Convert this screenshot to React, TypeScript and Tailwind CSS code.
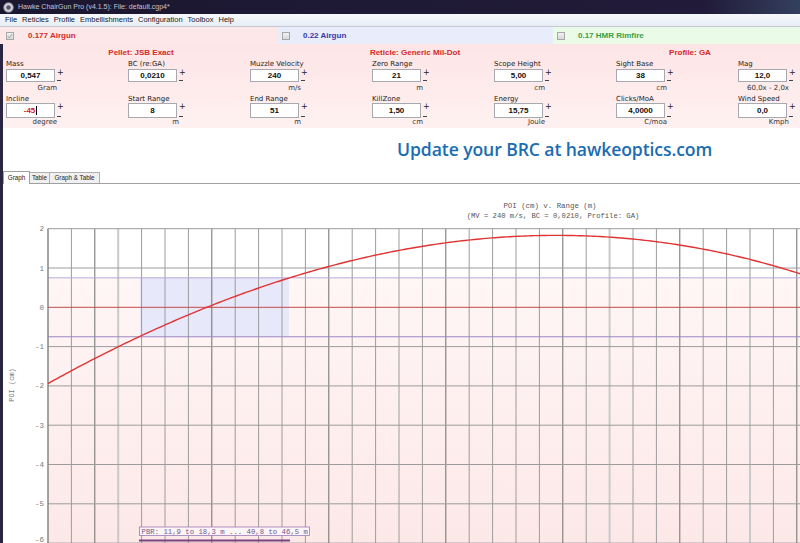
import React from 'react';

type Field = { label: string; value: string; unit: string; red?: boolean };

const row1: Field[] = [
  { label: 'Mass', value: '0,547', unit: 'Gram' },
  { label: 'BC (re:GA)', value: '0,0210', unit: '' },
  { label: 'Muzzle Velocity', value: '240', unit: 'm/s' },
  { label: 'Zero Range', value: '21', unit: 'm' },
  { label: 'Scope Height', value: '5,00', unit: 'cm' },
  { label: 'Sight Base', value: '38', unit: 'cm' },
  { label: 'Mag', value: '12,0', unit: '60,0x - 2,0x' },
];

const row2: Field[] = [
  { label: 'Incline', value: '-45', unit: 'degree', red: true },
  { label: 'Start Range', value: '8', unit: 'm' },
  { label: 'End Range', value: '51', unit: 'm' },
  { label: 'KillZone', value: '1,50', unit: 'cm' },
  { label: 'Energy', value: '15,75', unit: 'Joule' },
  { label: 'Clicks/MoA', value: '4,0000', unit: 'C/moa' },
  { label: 'Wind Speed', value: '0,0', unit: 'Kmph' },
];

function ParamRow({ fields, tall }: { fields: Field[]; tall?: boolean }) {
  return (
    <div className="flex pl-[3px]">
      {fields.map((f) => (
        <div key={f.label} className="w-[122px] shrink-0">
          <div className={(tall ? 'h-[8px] leading-[8px]' : 'h-[9px] leading-[9px]') + ' text-[7px] text-[#222] whitespace-nowrap'}>
            {f.label}
          </div>
          <div className={(tall ? 'h-[15px]' : 'h-[13px]') + ' flex'}>
            <div className="w-[49px] h-full bg-white border border-[#a7a9b0] flex items-center justify-center font-['Liberation_Sans',sans-serif] font-bold text-[8px]">
              {f.red ? (
                <span className="text-[#d42020] flex items-center">
                  {f.value}
                  <span className="inline-block w-[1px] h-[9px] bg-black ml-[1px]" />
                </span>
              ) : (
                <span className="text-[#111]">{f.value}</span>
              )}
            </div>
            <div className="w-[8px] pl-[2px] flex flex-col justify-between text-[#222]">
              <span className="text-[8px] leading-[8px]">+</span>
              <span className="block w-[4px] h-[1px] bg-[#444] mb-[1px]" />
            </div>
          </div>
          <div className={(tall ? 'h-[8px] leading-[8px]' : 'h-[13px] leading-[13px]') + ' w-[51px] text-right text-[7px] text-[#333] whitespace-nowrap'}>
            {f.unit}
          </div>
        </div>
      ))}
    </div>
  );
}

function Check({ checked }: { checked?: boolean }) {
  return (
    <div className="w-[8px] h-[8px] border border-[#a8a8a8] bg-gradient-to-b from-[#f2f2f2] to-[#d8d8d8] flex items-center justify-center">
      {checked && (
        <svg width="6" height="6" viewBox="0 0 6 6">
          <path d="M0.8 3.2 L2.3 4.7 L5.2 1" stroke="#9a9a9a" strokeWidth="1" fill="none" />
        </svg>
      )}
    </div>
  );
}

function Chart() {
  const x0 = 48;
  const step = 23.4;
  const yv = (v: number) => 307.3 - v * 39.3;
  const vlines = Array.from({ length: 33 }, (_, i) => i);
  const hvals = [2, 1, 0, -1, -2, -3, -4, -5, -6];
  // trajectory fitted as a cubic in range (m) past the start range
  const poi = (s: number) => -1.94 + 0.33208 * s - 0.0066037 * s * s - 0.0000319 * s * s * s;
  let curve = '';
  for (let x = x0; x <= 802; x += 3) {
    const s = (x - x0) / step;
    curve += (x === x0 ? 'M' : ' L') + x + ' ' + yv(poi(s)).toFixed(2);
  }
  return (
    <svg width="797" height="359" viewBox="3 184 797 359" className="block">
      <defs>
        <linearGradient id="pinkbg" x1="0" y1="0" x2="0" y2="1">
          <stop offset="0" stopColor="#fff6f6" />
          <stop offset="1" stopColor="#fde8e8" />
        </linearGradient>
      </defs>
      <rect x="3" y="184" width="797" height="359" fill="#ffffff" />
      <rect x={x0} y={yv(0.75)} width={800 - x0} height={543 - yv(0.75)} fill="url(#pinkbg)" />
      <rect x="140" y={yv(0.75)} width="149" height={yv(-0.75) - yv(0.75)} fill="#e8e8fb" />
      {vlines.map((i) => {
        const x = x0 + i * step;
        const dark = (i + 8) % 5 === 0;
        const light = i === 3 || i === 24 || i === 30;
        return (
          <line
            key={i}
            x1={x}
            x2={x}
            y1={yv(2)}
            y2={543}
            stroke={dark ? '#6e6e6e' : light ? '#c9c9c9' : '#9c9c9c'}
            strokeWidth={light ? 2 : 1}
          />
        );
      })}
      {hvals.map((v) => (
        <line key={v} x1={x0} x2={800} y1={yv(v)} y2={yv(v)} stroke={v === 0 ? '#c24a4a' : '#9c9c9c'} strokeWidth="1" />
      ))}
      <line x1={x0} x2={800} y1={yv(0.75)} y2={yv(0.75)} stroke="#b6a8d6" strokeWidth="1" />
      <line x1={x0} x2={800} y1={yv(-0.75)} y2={yv(-0.75)} stroke="#9a86c4" strokeWidth="1" />
      <line x1={x0} x2={x0} y1={yv(2)} y2={543} stroke="#7a7a7a" strokeWidth="1" />
      <path d={curve} stroke="#e03434" strokeWidth="1.4" fill="none" strokeLinejoin="round" />
      {hvals.map((v) => (
        <text
          key={v}
          x="44"
          y={v === -6 ? 541.5 : yv(v) + 2.5}
          textAnchor="end"
          fontFamily="Liberation Mono, monospace"
          fontSize="7.5"
          fill="#7a7a7a"
        >
          {v < 0 ? '-' + Math.abs(v) : v}
        </text>
      ))}
      <text
        x="14"
        y="385"
        transform="rotate(-90 14 385)"
        textAnchor="middle"
        fontFamily="Liberation Mono, monospace"
        fontSize="7"
        fill="#7a7a7a"
      >
        POI (cm)
      </text>
      <text x="550" y="208" textAnchor="middle" fontFamily="Liberation Mono, monospace" fontSize="7.4" fill="#555">
        POI (cm) v. Range (m)
      </text>
      <text x="553" y="217.5" textAnchor="middle" fontFamily="Liberation Mono, monospace" fontSize="7.2" fill="#555">
        (MV = 240 m/s, BC = 0,0210, Profile: GA)
      </text>
      <rect x="139.5" y="527" width="170" height="8.5" fill="#fdf4f8" stroke="#9a7cb8" strokeWidth="0.8" />
      <text x="141.5" y="533.6" fontFamily="Liberation Mono, monospace" fontSize="7.3" fill="#6e5a8a">
        PBR: 11,9 to 18,3 m ... 40,8 to 46,5 m
      </text>
      <line x1="139" x2="290" y1="540.5" y2="540.5" stroke="#7e3f7e" strokeWidth="2" />
    </svg>
  );
}

export default function App() {
  const menu = ['File', 'Reticles', 'Profile', 'Embellishments', 'Configuration', 'Toolbox', 'Help'];
  return (
    <div className="w-[800px] h-[543px] overflow-hidden bg-white font-['DejaVu_Sans',sans-serif] flex flex-col">
      {/* title bar */}
      <div className="h-[14px] shrink-0 flex items-center bg-[linear-gradient(90deg,#1b1730_0%,#211b39_88%,#33405e_100%)]">
        <svg width="11" height="11" viewBox="0 0 11 11" className="ml-[3px]">
          <circle cx="5.5" cy="5.5" r="4.8" fill="#cfcfd6" stroke="#8a8a96" strokeWidth="0.8" />
          <circle cx="5.5" cy="5.5" r="2.2" fill="#55556a" />
        </svg>
        <span className="ml-[4px] font-['Liberation_Sans',sans-serif] text-[7px] text-[#c6c3d2] whitespace-nowrap">
          Hawke ChairGun Pro (v4.1.5): File: default.cgp4*
        </span>
      </div>
      {/* menu bar */}
      <div className="h-[13px] shrink-0 flex items-center gap-[5px] pl-[5px] bg-gradient-to-b from-[#f6f8fc] to-[#e8edf5] border-b border-[#c4c9d6] font-['Liberation_Sans',sans-serif] text-[7.5px] text-[#1a1a1a]">
        {menu.map((m) => (
          <span key={m}>{m}</span>
        ))}
      </div>
      {/* gun tabs */}
      <div className="h-[17px] shrink-0 flex font-['Liberation_Sans',sans-serif] font-bold text-[8px]">
        <div className="w-[278px] bg-[#fde7e8] flex items-center pl-[6px]">
          <Check checked />
          <span className="ml-[14px] text-[#d42a2a]">0.177 Airgun</span>
        </div>
        <div className="w-[275px] bg-[#e9ecfb] flex items-center pl-[4px]">
          <Check />
          <span className="ml-[13px] text-[#3737a8]">0.22 Airgun</span>
        </div>
        <div className="flex-1 bg-[#eafbe8] flex items-center pl-[4px]">
          <Check />
          <span className="ml-[13px] text-[#38a048]">0.17 HMR Rimfire</span>
        </div>
      </div>
      <div className="flex flex-1 min-h-0">
        <div className="w-[3px] shrink-0 bg-[#2a2540]" />
        <div className="flex-1 flex flex-col min-w-0">
          {/* parameters */}
          <div className="h-[84px] shrink-0 bg-gradient-to-b from-[#fde5e6] to-[#fff1f1] pt-[4px]">
            <div className="h-[10px] leading-[10px] mb-[2px] flex -ml-[3px] font-['Liberation_Sans',sans-serif] font-bold text-[8px] text-[#d42a2a] whitespace-nowrap">
              <div className="w-[282px] shrink-0 text-center">Pellet: JSB Exact</div>
              <div className="w-[266px] shrink-0 text-center">Reticle: Generic Mil-Dot</div>
              <div className="w-[284px] shrink-0 text-center">Profile: GA</div>
            </div>
            <ParamRow fields={row1} />
            <ParamRow fields={row2} tall />
          </div>
          {/* banner */}
          <div className="h-[42px] shrink-0 flex items-center pl-[394px]">
            <span className="font-['Open_Sans',sans-serif] font-semibold text-[17.6px] text-[#1b6cb1] whitespace-nowrap tracking-[-0.1px]">
              Update your BRC at hawkeoptics.com
            </span>
          </div>
          {/* view tabs */}
          <div className="h-[14px] shrink-0 flex items-end border-b border-[#a0a0a0] font-['Liberation_Sans',sans-serif] text-[6.3px] text-[#222]">
            <div className="w-[27px] h-[13px] bg-white border border-b-0 border-[#a0a0a0] flex items-center justify-center -mb-[1px]">Graph</div>
            <div className="w-[20px] h-[11px] bg-[#f0f0f0] border border-l-0 border-b-0 border-[#b0b0b0] flex items-center justify-center">Table</div>
            <div className="w-[50px] h-[11px] bg-[#f0f0f0] border border-l-0 border-b-0 border-[#b0b0b0] flex items-center justify-center whitespace-nowrap">Graph &amp; Table</div>
          </div>
          <div className="flex-1 min-h-0">
            <Chart />
          </div>
        </div>
      </div>
    </div>
  );
}
